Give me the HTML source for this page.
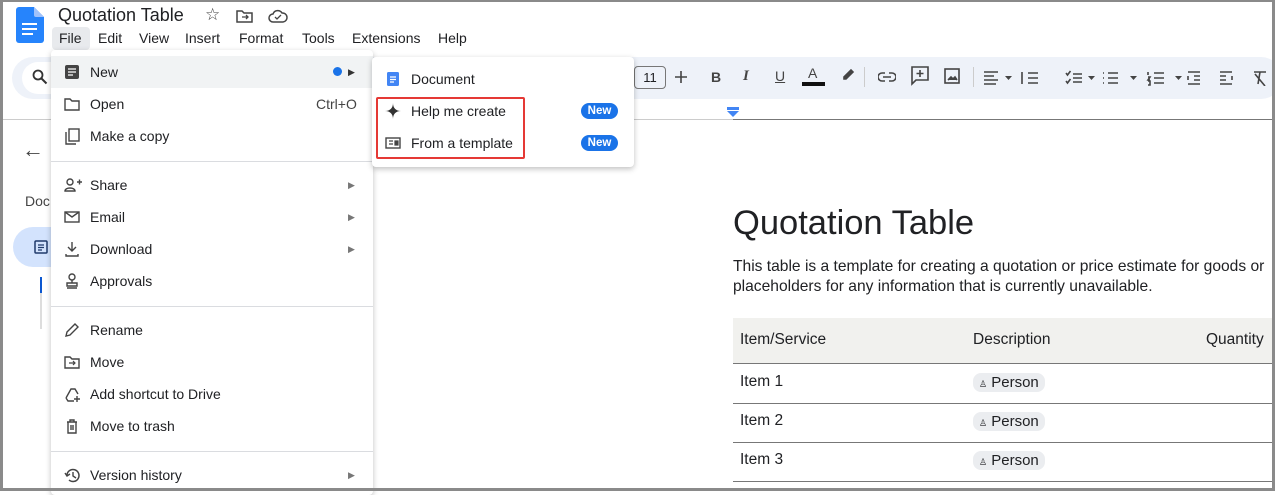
<!DOCTYPE html>
<html><head><style>
*{margin:0;padding:0;box-sizing:border-box}
body{width:1275px;height:491px;overflow:hidden;background:#fff;font-family:"Liberation Sans",Arial,sans-serif;color:#202124;position:relative}
.abs{position:absolute}
.frame{position:absolute;inset:0;border:3px solid #8a8a8a;border-top-width:2px;pointer-events:none;z-index:50}
.menu-bar span{position:absolute;top:30px;font-size:14px}
.mi{position:absolute;left:0;width:322px;height:32px;font-size:14px;line-height:32px}
.mi .t{position:absolute;left:39px}
.mi svg{position:absolute;left:13px;top:8px}
.arr{position:absolute;left:297px;top:0;font-size:9px;color:#777}
.sep{position:absolute;left:0;width:322px;height:1px;background:#dadce0}
.badge{position:absolute;left:209px;top:8px;background:#1a73e8;color:#fff;font-size:11.5px;font-weight:bold;border-radius:8px;width:37px;height:16px;line-height:16px;text-align:center}
.chip{display:inline-block;background:#ebedf0;border-radius:8px;padding:1px 6px;font-size:15px}
.tb{position:absolute;top:69px}
.tb path,.tb rect,.tb circle{stroke:#444;fill:none;stroke-width:1.6}
.dc{font-size:15.5px}
</style></head><body>
<svg class="abs" style="left:16px;top:7px" width="28" height="36" viewBox="0 0 28 36"><path d="M3 0h15l10 10v23a3 3 0 0 1-3 3H3a3 3 0 0 1-3-3V3a3 3 0 0 1 3-3z" fill="#2684fc"/><path d="M18 0l10 10h-8a2 2 0 0 1-2-2z" fill="#a1c2fa"/><rect x="6" y="16" width="15" height="2" fill="#fff"/><rect x="6" y="21" width="15" height="2" fill="#fff"/><rect x="6" y="26" width="11" height="2" fill="#fff"/></svg>
<div class="abs" style="left:58px;top:5px;font-size:18px">Quotation Table</div>
<div class="abs" style="left:205px;top:5px;font-size:17px;color:#444">☆</div>
<svg class="abs" style="left:236px;top:9px" width="18" height="14"><path d="M1 2h5l2 2h8v9H1z" fill="none" stroke="#444" stroke-width="1.5"/><path d="M6 8h6M10 6l2 2-2 2" stroke="#444" fill="none" stroke-width="1.3"/></svg>
<svg class="abs" style="left:268px;top:9px" width="20" height="14"><path d="M5 13a4 4 0 0 1 0-8 5 5 0 0 1 9-1 4 4 0 0 1 1 9z" fill="none" stroke="#444" stroke-width="1.5"/><path d="M7 8l2 2 4-4" stroke="#444" fill="none" stroke-width="1.3"/></svg>
<div class="abs" style="left:52px;top:27px;width:38px;height:23px;background:#e8eaed;border-radius:4px"></div>
<div class="menu-bar"><span style="left:59px">File</span><span style="left:98px">Edit</span><span style="left:139px">View</span><span style="left:185px">Insert</span><span style="left:239px">Format</span><span style="left:302px">Tools</span><span style="left:352px">Extensions</span><span style="left:438px">Help</span></div>
<!-- toolbar -->
<div class="abs" style="left:12px;top:57px;width:1270px;height:42px;background:#eef2f9;border-radius:22px"></div>
<div class="abs" style="left:22px;top:62px;width:60px;height:32px;background:#fff;border-radius:16px"></div>
<svg class="abs" style="left:32px;top:69px" width="16" height="16"><circle cx="6" cy="6" r="4.5" fill="none" stroke="#333" stroke-width="1.8"/><path d="M9.5 9.5l5 5" stroke="#333" stroke-width="2"/></svg>
<div class="abs" style="left:634px;top:66px;width:32px;height:23px;border:1px solid #777;border-radius:4px;font-size:13px;text-align:center;line-height:21px">11</div>
<svg class="tb" style="left:674px" width="14" height="16"><path d="M7 2v12M1 8h12"/></svg>
<div class="abs" style="left:711px;top:69px;font-size:14px;font-weight:bold;color:#444">B</div>
<div class="abs" style="left:743px;top:68px;font-size:15px;font-style:italic;font-family:'Liberation Serif';font-weight:bold;color:#444">I</div>
<div class="abs" style="left:775px;top:68px;font-size:14px;text-decoration:underline;color:#444">U</div>
<div class="abs" style="left:808px;top:65px;font-size:14px;color:#444">A</div>
<div class="abs" style="left:802px;top:82px;width:23px;height:4px;background:#111"></div>
<svg class="tb" style="left:841px;top:66px" width="14" height="14"><path d="M3 11l7-7 2 2-7 7H3z" style="fill:#444"/></svg>
<div class="abs" style="left:864px;top:67px;width:1px;height:20px;background:#ccc"></div>
<svg class="tb" style="left:878px;top:71px" width="18" height="12"><path d="M7 2H4a4 4 0 0 0 0 8h3M11 2h3a4 4 0 0 1 0 8h-3M5 6h8"/></svg>
<svg class="tb" style="left:911px;top:66px" width="18" height="20"><path d="M1 1h16v13H5l-4 4z"/><path d="M9 4v7M5.5 7.5h7"/></svg>
<svg class="tb" style="left:944px;top:68px" width="16" height="16"><rect x="1" y="1" width="14" height="14"/><path d="M4 12l3-3 2 2 2-2 2 3" style="fill:#444"/></svg>
<div class="abs" style="left:973px;top:67px;width:1px;height:20px;background:#ccc"></div>
<svg class="tb" style="left:982px;top:70px" width="300" height="16"><path d="M2 2h14M2 6h10M2 10h14M2 14h12"/><path d="M46 3h10M46 8h10M46 13h10M40 2v12"/><path d="M91 4h9M91 8h9M91 12h9M84 3l1.5 2 3-4M84 11l1.5 2 3-4"/><path d="M126 3h10M126 8h10M126 13h10M121 3h1M121 8h1M121 13h1"/><path d="M172 3h10M172 8h10M172 13h10M166 2v3M166 7h2l-2 3h2M166 11h2v4h-2"/><path d="M206 2h12M212 6h6M212 10h6M206 14h12M206 6v4"/><path d="M238 2h12M238 6h6M238 10h6M238 14h12M250 6v4"/><path d="M272 2h12M278 2l-2 12M273 4l10 12"/></path></svg>
<svg class="abs" style="left:1003px;top:76px" width="200" height="6"><path d="M2 0h7l-3.5 4z M85 0h7l-3.5 4z M127 0h7l-3.5 4z M172 0h7l-3.5 4z" fill="#444"/></svg>
<!-- ruler -->
<div class="abs" style="left:0;top:119px;width:733px;height:1px;background:#ccc"></div>
<div class="abs" style="left:733px;top:119px;width:542px;height:1px;background:#777"></div>
<div class="abs" style="left:727px;top:107px;width:12px;height:3px;background:#4285f4"></div>
<div class="abs" style="left:727px;top:111px;width:0;height:0;border-left:6px solid transparent;border-right:6px solid transparent;border-top:6px solid #4285f4"></div>
<!-- sidebar -->
<div class="abs" style="left:22px;top:137px;font-size:22px;color:#444">←</div>
<div class="abs" style="left:25px;top:193px;font-size:14px;color:#444">Doc</div>
<div class="abs" style="left:13px;top:227px;width:80px;height:40px;background:#d3e3fd;border-radius:20px"></div>
<svg class="abs" style="left:34px;top:240px" width="14" height="14"><rect x="1" y="1" width="12" height="12" rx="1" fill="none" stroke="#1f3a6b" stroke-width="1.5"/><path d="M4 5h6M4 7.5h6M4 10h4" stroke="#1f3a6b" stroke-width="1.2"/></svg>
<div class="abs" style="left:40px;top:277px;width:2px;height:16px;background:#0b57d0"></div>
<div class="abs" style="left:40px;top:293px;width:2px;height:36px;background:#ddd"></div>
<!-- document -->
<div class="abs" style="left:733px;top:204px;font-size:34.5px">Quotation Table</div>
<div class="abs" style="left:733px;top:257px;font-size:15.6px;line-height:20px;white-space:nowrap">This table is a template for creating a quotation or price estimate for goods or<br>placeholders for any information that is currently unavailable.</div>
<div class="abs" style="left:733px;top:318px;width:540px;height:46px;background:#f1f1ee;border-bottom:1px solid #777"></div>
<div class="abs dc" style="left:740px;top:331px">Item/Service</div>
<div class="abs dc" style="left:973px;top:331px">Description</div>
<div class="abs dc" style="left:1206px;top:331px">Quantity</div>
<div class="abs" style="left:733px;top:403px;width:540px;height:1px;background:#777"></div>
<div class="abs" style="left:733px;top:442px;width:540px;height:1px;background:#777"></div>
<div class="abs" style="left:733px;top:481px;width:540px;height:1px;background:#777"></div>
<div class="abs dc" style="left:740px;top:373px">Item 1</div>
<div class="abs dc" style="left:740px;top:412px">Item 2</div>
<div class="abs dc" style="left:740px;top:451px">Item 3</div>
<div class="abs chip" style="left:973px;top:373px"><span style="font-size:9px">♙</span> Person</div>
<div class="abs chip" style="left:973px;top:412px"><span style="font-size:9px">♙</span> Person</div>
<div class="abs chip" style="left:973px;top:451px"><span style="font-size:9px">♙</span> Person</div>
<!-- file menu -->
<div class="abs" style="left:51px;top:50px;width:322px;height:445px;background:#fff;box-shadow:0 2px 6px rgba(0,0,0,.25);border-radius:4px;z-index:10">
<div class="mi" style="top:6px;background:#f1f3f4"><svg width="16" height="16"><rect x="1" y="1" width="14" height="14" rx="2" fill="#444"/><path d="M4 5h8M4 8h8M4 11h5" stroke="#fff" stroke-width="1.3"/></svg><span class="t">New</span><span style="position:absolute;left:282px;top:11px;width:9px;height:9px;border-radius:50%;background:#1a73e8"></span><span class="arr" style="color:#333">▶</span></div>
<div class="mi" style="top:38px"><svg width="16" height="16"><path d="M1 3h5l2 2h7v9H1z" fill="none" stroke="#444" stroke-width="1.4"/></svg><span class="t">Open</span><span style="position:absolute;left:265px;color:#444">Ctrl+O</span></div>
<div class="mi" style="top:70px"><svg width="16" height="18"><rect x="5" y="1" width="10" height="12" fill="none" stroke="#444" stroke-width="1.4"/><path d="M2 4v12h10" fill="none" stroke="#444" stroke-width="1.4"/></svg><span class="t">Make a copy</span></div>
<div class="sep" style="top:111px"></div>
<div class="mi" style="top:119px"><svg width="18" height="16"><circle cx="6" cy="5" r="3" fill="none" stroke="#444" stroke-width="1.4"/><path d="M1 14c0-4 10-4 10 0z" fill="none" stroke="#444" stroke-width="1.4"/><path d="M13 5h5M15.5 2.5v5" stroke="#444" stroke-width="1.4"/></svg><span class="t">Share</span><span class="arr">▶</span></div>
<div class="mi" style="top:151px"><svg width="16" height="16"><rect x="1" y="3" width="14" height="10" fill="none" stroke="#444" stroke-width="1.4"/><path d="M1 3l7 5 7-5" fill="none" stroke="#444" stroke-width="1.4"/></svg><span class="t">Email</span><span class="arr">▶</span></div>
<div class="mi" style="top:183px"><svg width="16" height="16"><path d="M8 1v9M4 6l4 4 4-4M2 13v2h12v-2" fill="none" stroke="#444" stroke-width="1.4"/></svg><span class="t">Download</span><span class="arr">▶</span></div>
<div class="mi" style="top:215px"><svg width="16" height="16"><circle cx="8" cy="4" r="3" fill="none" stroke="#444" stroke-width="1.4"/><path d="M8 7v3M3 10h10v3H3zM3 15h10" fill="none" stroke="#444" stroke-width="1.4"/></svg><span class="t">Approvals</span></div>
<div class="sep" style="top:256px"></div>
<div class="mi" style="top:264px"><svg width="16" height="16"><path d="M2 14l1-4 8-8 3 3-8 8z" fill="none" stroke="#444" stroke-width="1.4"/></svg><span class="t">Rename</span></div>
<div class="mi" style="top:296px"><svg width="16" height="16"><path d="M1 3h5l2 2h7v9H1z" fill="none" stroke="#444" stroke-width="1.4"/><path d="M5 9h6M9 7l2 2-2 2" fill="none" stroke="#444" stroke-width="1.2"/></svg><span class="t">Move</span></div>
<div class="mi" style="top:328px"><svg width="17" height="17"><path d="M2 12l5-9h4l3 5M2 12l2 3h6" fill="none" stroke="#444" stroke-width="1.4"/><path d="M13 10v6M10 13h6" stroke="#444" stroke-width="1.4"/></svg><span class="t">Add shortcut to Drive</span></div>
<div class="mi" style="top:360px"><svg width="16" height="16"><path d="M3 4h10M6 4V2h4v2M4 4v11h8V4M7 7v5M9 7v5" fill="none" stroke="#444" stroke-width="1.4"/></svg><span class="t">Move to trash</span></div>
<div class="sep" style="top:401px"></div>
<div class="mi" style="top:409px"><svg width="17" height="17"><path d="M3 8a6 6 0 1 1 2 5" fill="none" stroke="#444" stroke-width="1.5"/><path d="M1 6l2 3 3-2M9 5v4l3 2" fill="none" stroke="#444" stroke-width="1.4"/></svg><span class="t">Version history</span><span class="arr">▶</span></div>
</div>
<!-- submenu -->
<div class="abs" style="left:372px;top:57px;width:262px;height:110px;background:#fff;box-shadow:0 2px 6px rgba(0,0,0,.25);border-radius:4px;z-index:11">
<div class="mi" style="top:6px;width:262px"><svg width="16" height="16"><rect x="2" y="1" width="12" height="14" rx="1.5" fill="#4285f4"/><path d="M5 6h6M5 8.5h6M5 11h4" stroke="#fff" stroke-width="1.2"/></svg><span class="t">Document</span></div>
<div class="mi" style="top:38px;width:262px"><svg width="16" height="16"><path d="M8 0C8 5 11 8 16 8 11 8 8 11 8 16 8 11 5 8 0 8 5 8 8 5 8 0z" fill="#333"/></svg><span class="t">Help me create</span><span class="badge">New</span></div>
<div class="mi" style="top:70px;width:262px"><svg width="16" height="16"><rect x="1" y="3" width="14" height="10" fill="none" stroke="#444" stroke-width="1.4"/><path d="M4 6h4M4 9h4M10 6h3v4h-3z" stroke="#444" stroke-width="1.2" fill="#444"/></svg><span class="t">From a template</span><span class="badge">New</span></div>
</div>
<div class="abs" style="left:376px;top:97px;width:149px;height:62px;border:2px solid #e53935;border-radius:2px;z-index:12"></div>
<div class="frame"></div>
</body></html>
